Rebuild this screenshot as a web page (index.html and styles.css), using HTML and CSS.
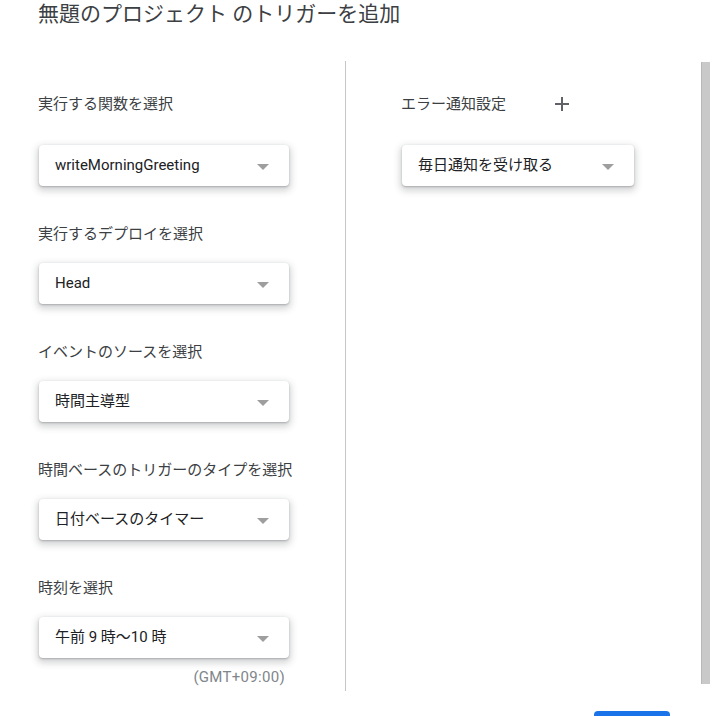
FILE: index.html
```html
<!DOCTYPE html>
<html lang="ja">
<head>
<meta charset="utf-8">
<link rel="stylesheet" href="styles.css">
</head>
<body>
<header class="title">無題のプロジェクト のトリガーを追加</header>
<div class="main">
  <section class="left">
    <div class="field field-first">
      <div class="label">実行する関数を選択</div>
      <div class="select"><span class="value latin">writeMorningGreeting</span><span class="arrow"></span></div>
    </div>
    <div class="field">
      <div class="label">実行するデプロイを選択</div>
      <div class="select"><span class="value latin">Head</span><span class="arrow"></span></div>
    </div>
    <div class="field">
      <div class="label">イベントのソースを選択</div>
      <div class="select"><span class="value">時間主導型</span><span class="arrow"></span></div>
    </div>
    <div class="field">
      <div class="label">時間ベースのトリガーのタイプを選択</div>
      <div class="select"><span class="value">日付ベースのタイマー</span><span class="arrow"></span></div>
    </div>
    <div class="field">
      <div class="label">時刻を選択</div>
      <div class="select"><span class="value">午前 9 時～10 時</span><span class="arrow"></span></div>
      <div class="tz">(GMT+09:00)</div>
    </div>
  </section>
  <section class="right">
    <div class="field field-first">
      <div class="label-row">
        <div class="label">エラー通知設定</div>
        <svg class="plus" width="14" height="14" viewBox="0 0 14 14"><path d="M7 0v14M0 7h14" stroke="#5f6368" stroke-width="2"/></svg>
      </div>
      <div class="select select-narrow"><span class="value">毎日通知を受け取る</span><span class="arrow"></span></div>
    </div>
  </section>
  <div class="scrollbar"></div>
</div>
<div class="save"></div>
</body>
</html>
```
FILE: styles.css
```css
html, body {
  margin: 0;
  padding: 0;
  background: #fff;
  width: 716px;
  height: 716px;
  overflow: hidden;
  font-family: Roboto, "Noto Sans CJK JP", sans-serif;
  color: #3c4043;
}
.title {
  height: 61px;
  box-sizing: border-box;
  padding: 1px 0 0 38px;
  font-size: 21px;
  line-height: 27px;
  color: #3c4043;
  font-family: Roboto, "Noto Sans CJK JP", sans-serif;
}
.main {
  display: flex;
  height: 630px;
}
.left {
  width: 345px;
  box-sizing: border-box;
  padding: 33px 0 0 38px;
}
.right {
  flex: 1;
  border-left: 1px solid #c6c6c6;
  padding: 33px 0 0 55px;
}
.field {
  display: flex;
  flex-direction: column;
  margin-top: 38px;
}
.field-first {
  margin-top: 0;
}
.label {
  font-size: 15px;
  line-height: 20px;
  height: 20px;
  color: #3c4043;
  margin-bottom: 19px;
}
.field-first .label {
  margin-bottom: 31px;
}
.label-row {
  display: flex;
  align-items: flex-start;
}
.plus {
  margin: 3px 0 0 49px;
}
.select {
  width: 250px;
  height: 41px;
  box-sizing: border-box;
  margin-left: 1px;
  border-radius: 4px;
  background: #fff;
  box-shadow: 0 1px 2px rgba(60,64,67,0.3), 0 3px 7px 2px rgba(60,64,67,0.22);
  display: flex;
  align-items: center;
  justify-content: space-between;
  padding: 0 20px 0 16px;
}
.select-narrow {
  width: 232px;
  margin-left: 1px;
}
.value {
  font-size: 15px;
  color: #202124;
  margin-top: -4px;
}
.value.latin {
  margin-top: -1px;
}
.arrow {
  width: 0;
  height: 0;
  border-left: 6px solid transparent;
  border-right: 6px solid transparent;
  border-top: 6px solid #9e9e9e;
  margin-top: 2px;
}
.tz {
  width: 247px;
  text-align: right;
  font-size: 15px;
  letter-spacing: 0.3px;
  line-height: 18px;
  color: #80868b;
  margin-top: 10px;
}
.scrollbar {
  width: 9px;
  height: 622px;
  margin: 1px 6px 0 0;
  background: #c9c9c9;
  border-left: 1px solid #b8b8b8;
  box-sizing: border-box;
}
.save {
  margin: 20px 0 0 594px;
  width: 76px;
  height: 36px;
  border-radius: 4px;
  background: #1a73e8;
}
```
